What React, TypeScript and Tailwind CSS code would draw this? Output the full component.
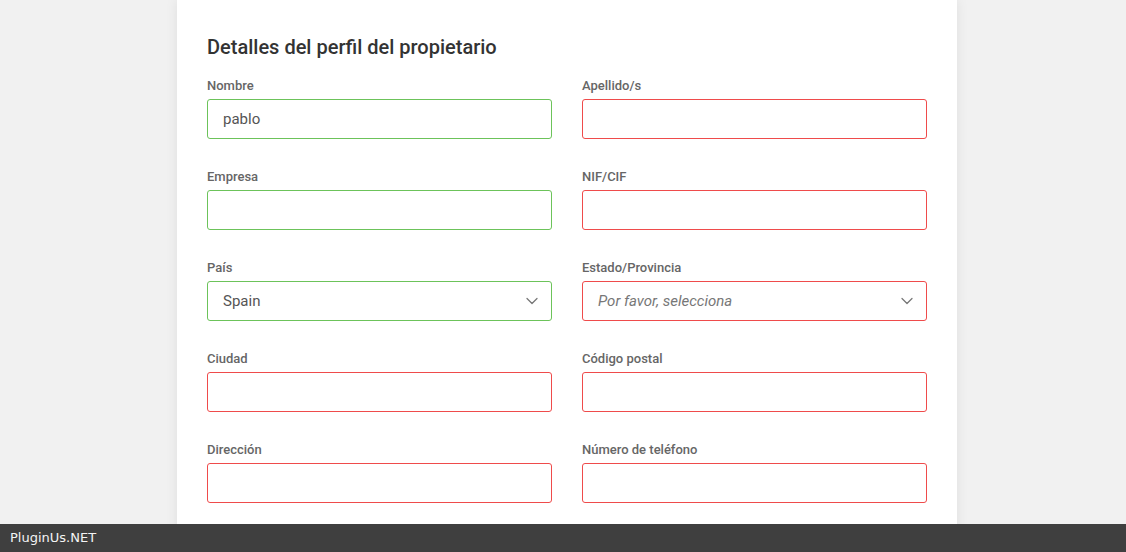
import { ChevronDown } from "lucide-react";

type Field = {
  label: string;
  value?: string;
  placeholder?: string;
  ok: boolean;
  select?: boolean;
};

const fields: Field[] = [
  { label: "Nombre", value: "pablo", ok: true },
  { label: "Apellido/s", ok: false },
  { label: "Empresa", ok: true },
  { label: "NIF/CIF", ok: false },
  { label: "País", value: "Spain", ok: true, select: true },
  { label: "Estado/Provincia", placeholder: "Por favor, selecciona", ok: false, select: true },
  { label: "Ciudad", ok: false },
  { label: "Código postal", ok: false },
  { label: "Dirección", ok: false },
  { label: "Número de teléfono", ok: false },
];

function FormField({ field }: { field: Field }) {
  const border = field.ok ? "border-[#6cc35a]" : "border-[#ef4b4b]";
  return (
    <div className="flex flex-col">
      <label className="mt-px mb-[3px] h-5 text-[13px] leading-5 font-medium text-[#666]">{field.label}</label>
      <div
        className={`flex h-10 items-center justify-between rounded-[3px] border ${border} bg-white pr-[9px] pl-[15px] text-[15px] text-[#555]`}
      >
        {field.placeholder ? (
          <span className="italic text-[#777]">{field.placeholder}</span>
        ) : (
          <span>{field.value}</span>
        )}
        {field.select && <ChevronDown className="h-5 w-5 text-[#777]" strokeWidth={1.5} />}
      </div>
    </div>
  );
}

export default function App() {
  return (
    <div className="relative h-[552px] w-full overflow-hidden bg-[#f1f1f1] font-['Roboto',sans-serif]">
      <div className="ml-[177px] w-[780px] bg-white px-[30px] pt-[33px] pb-10 shadow-[0_0_12px_rgba(0,0,0,0.08)]">
        <h2 className="h-7 text-[20px] leading-7 font-medium text-[#333]">Detalles del perfil del propietario</h2>
        <div className="mt-[14px] grid grid-cols-2 gap-x-[30px] gap-y-[27px]">
          {fields.map((f) => (
            <FormField key={f.label} field={f} />
          ))}
        </div>
      </div>
      <div className="absolute right-0 bottom-0 left-0 flex h-7 items-center bg-[#3f3f3f] px-[10px] font-['DejaVu_Sans',sans-serif] text-[13px] text-[#f4f4f4]">
        PluginUs.NET
      </div>
    </div>
  );
}
